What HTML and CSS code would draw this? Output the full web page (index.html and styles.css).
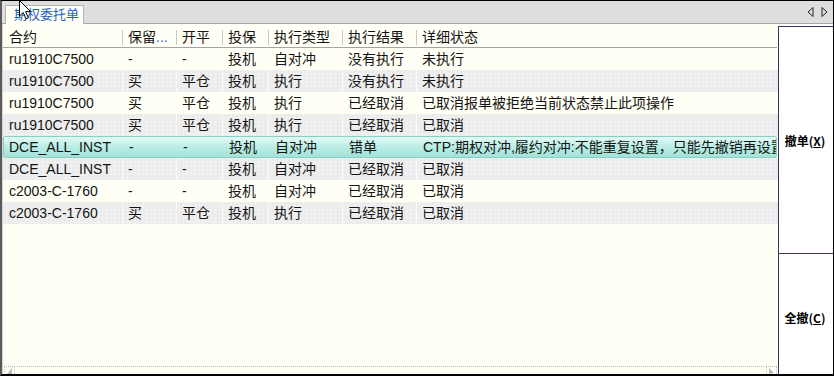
FILE: index.html
```html
<!DOCTYPE html>
<html lang="zh">
<head>
<meta charset="utf-8">
<link rel="stylesheet" href="styles.css">
</head>
<body>
<div class="app">
  <div class="tabbar">
    <div class="tab">期权委托单</div>
    <div class="arrows">
      <svg width="7" height="10" viewBox="0 0 7 10"><path d="M6 0.5 L6 9.5 L1 5 Z" fill="none" stroke="#222" stroke-width="1"/></svg>
      <svg width="7" height="10" viewBox="0 0 7 10"><path d="M1 0.5 L1 9.5 L6 5 Z" fill="none" stroke="#222" stroke-width="1"/></svg>
    </div>
  </div>
  <div class="main">
    <div class="grid">
      <div class="row head">
        <div class="c c1">合约</div><div class="c">保留<span class="dots">...</span></div><div class="c">开平</div><div class="c">投保</div><div class="c">执行类型</div><div class="c">执行结果</div><div class="c last">详细状态</div>
      </div>
      <div class="row odd">
        <div class="c c1">ru1910C7500</div><div class="c">-</div><div class="c">-</div><div class="c">投机</div><div class="c">自对冲</div><div class="c">没有执行</div><div class="c last">未执行</div>
      </div>
      <div class="row even">
        <div class="c c1">ru1910C7500</div><div class="c">买</div><div class="c">平仓</div><div class="c">投机</div><div class="c">执行</div><div class="c">没有执行</div><div class="c last">未执行</div>
      </div>
      <div class="row odd">
        <div class="c c1">ru1910C7500</div><div class="c">买</div><div class="c">平仓</div><div class="c">投机</div><div class="c">执行</div><div class="c">已经取消</div><div class="c last">已取消报单被拒绝当前状态禁止此项操作</div>
      </div>
      <div class="row even">
        <div class="c c1">ru1910C7500</div><div class="c">买</div><div class="c">平仓</div><div class="c">投机</div><div class="c">执行</div><div class="c">已经取消</div><div class="c last">已取消</div>
      </div>
      <div class="row sel">
        <div class="c c1">DCE_ALL_INST</div><div class="c">-</div><div class="c">-</div><div class="c">投机</div><div class="c">自对冲</div><div class="c">错单</div><div class="c last">CTP:期权对冲,履约对冲:不能重复设置，只能先撤销再设置</div>
      </div>
      <div class="row even">
        <div class="c c1">DCE_ALL_INST</div><div class="c">-</div><div class="c">-</div><div class="c">投机</div><div class="c">自对冲</div><div class="c">已经取消</div><div class="c last">已取消</div>
      </div>
      <div class="row odd">
        <div class="c c1">c2003-C-1760</div><div class="c">-</div><div class="c">-</div><div class="c">投机</div><div class="c">自对冲</div><div class="c">已经取消</div><div class="c last">已取消</div>
      </div>
      <div class="row even">
        <div class="c c1">c2003-C-1760</div><div class="c">买</div><div class="c">平仓</div><div class="c">投机</div><div class="c">执行</div><div class="c">已经取消</div><div class="c last">已取消</div>
      </div>
      <div class="filler"></div>
      <div class="hscroll">
        <span class="sb-btn"><svg width="7" height="6" viewBox="0 0 7 6"><path d="M6 0 L6 6 L1 6 Z" fill="#bbb"/></svg></span>
        <span class="sb-track"></span>
        <span class="sb-btn"><svg width="7" height="6" viewBox="0 0 7 6"><path d="M1 0 L6 5 L1 6 Z" fill="#bbb"/></svg></span>
      </div>
    </div>
    <div class="side">
      <div class="btn b1">撤单(<u>X</u>)</div>
      <div class="btn b2">全撤(<u>C</u>)</div>
    </div>
  </div>
</div>
<svg class="cursor" width="13" height="20" viewBox="0 0 13 20"><path d="M0.5 0.5 L0.5 16 L4.2 12.5 L7 18.8 L9.3 17.8 L6.6 11.6 L11.5 11.6 Z" fill="#fff" stroke="#000" stroke-width="1"/></svg>
</body>
</html>
```

FILE: styles.css
```css
html, body {
  margin: 0;
  padding: 0;
  width: 834px;
  height: 376px;
  overflow: hidden;
  background: #fff;
}
body {
  position: relative;
  font-family: "Liberation Sans", "Noto Sans CJK SC", sans-serif;
  font-size: 14px;
  color: #141414;
}
.app {
  width: 834px;
  height: 376px;
  box-sizing: border-box;
  border-top: 1px solid #000;
  border-bottom: 2px solid #000;
  border-left: 2px solid #5a5a5a;
  border-right: 1px solid #000;
  display: flex;
  flex-direction: column;
}
.tabbar {
  height: 22px;
  background: #dedede;
  border-bottom: 1px solid #a8a8a8;
  display: flex;
  align-items: flex-end;
  padding-left: 3px;
}
.tab {
  height: 19px;
  box-sizing: border-box;
  padding: 0 4px 0 8px;
  background: #fffff5;
  border: 1px solid #b4b4b4;
  border-bottom: none;
  color: #1f63c4;
  font-size: 13px;
  line-height: 18px;
  margin-bottom: -1px;
}
.arrows {
  margin-left: auto;
  align-self: center;
  display: flex;
  gap: 7px;
  padding-right: 5px;
}
.main {
  flex: 1;
  display: flex;
  min-height: 0;
}
.grid {
  flex: 1;
  display: flex;
  flex-direction: column;
  background: #fffff5;
  border-left: 1px solid #d4d4d4;
  min-width: 0;
}
.row {
  display: grid;
  grid-template-columns: 120px 54px 46px 46px 74px 74px 1fr;
  height: 22px;
  align-items: center;
  white-space: nowrap;
  overflow: hidden;
}
.row .c {
  padding-left: 5px;
  overflow: hidden;
  height: 22px;
  line-height: 22px;
  box-sizing: border-box;
}
.row .c1 { padding-left: 6px; }
.row .last { overflow: visible; }
.head {
  height: 23px;
  border-bottom: 1px solid #a4a4a4;
  margin-right: 1px;
}
.head .c {
  height: 15px;
  line-height: 15px;
  border-right: 1px solid #c8c8c8;
  margin-top: 3px;
}
.head .last { border-right: none; }
.dots { color: #1f63c4; }
.odd { background: #fffff5; }
.even {
  background-color: #efefef;
  background-image: radial-gradient(circle, #e2e2e2 0.6px, transparent 0.8px);
  background-size: 4px 4px;
}
.even .c { border-right: 1px solid #fbfbfb; }
.even .last { border-right: none; }
.sel {
  background: linear-gradient(#e4faf6, #b6ece3 55%, #a2e3d8);
  border: 1px solid #88cfc4;
  border-radius: 2px;
  height: 22px;
  box-sizing: border-box;
  margin-right: 1px;
}
.sel .c { height: 20px; line-height: 20px; }
.sel .c1 { padding-left: 5px; }
.filler { flex: 1; }
.hscroll {
  height: 8px;
  display: flex;
  align-items: stretch;
  gap: 2px;
  padding: 0 1px;
}
.sb-btn {
  width: 11px;
  box-sizing: border-box;
  border: 1px dotted #bdbdbd;
  border-bottom: none;
  display: flex;
  align-items: flex-end;
  justify-content: center;
}
.sb-track {
  flex: 1;
  border-top: 1px dotted #bdbdbd;
}
.side {
  width: 55px;
  display: flex;
  flex-direction: column;
  background: #fff;
  padding-top: 2px;
}
.btn {
  display: flex;
  align-items: center;
  justify-content: center;
  border-left: 1px solid #34345e;
  font-size: 12px;
  font-weight: bold;
  color: #000;
  font-family: "Noto Sans CJK SC", sans-serif;
  padding-right: 2px;
}
.btn u { text-underline-offset: 1px; }
.b1 {
  height: 226px;
  border-top: 1px solid #34345e;
}
.b2 {
  flex: 1;
  border-top: 1px solid #4a3450;
  padding-top: 6px;
}
.cursor {
  position: absolute;
  left: 19px;
  top: 0;
}
```
